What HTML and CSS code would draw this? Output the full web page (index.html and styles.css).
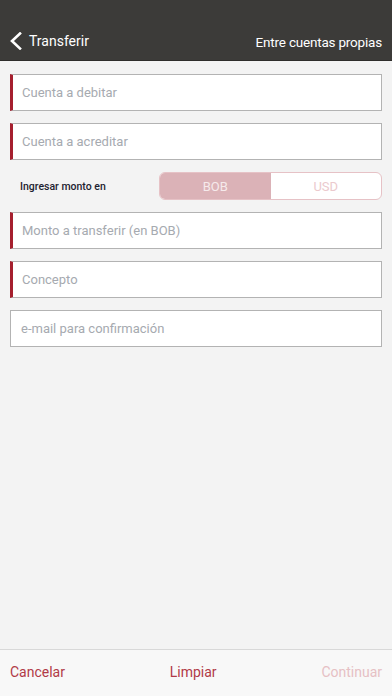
FILE: index.html
```html
<!DOCTYPE html>
<html lang="es">
<head>
<meta charset="utf-8">
<link rel="stylesheet" href="styles.css">
</head>
<body>
<div class="app">
  <header class="topbar">
    <div class="back">
      <svg class="chev" width="14" height="18" viewBox="0 0 14 18"><path d="M11 1.5 L3 9 L11 16.5" fill="none" stroke="#fff" stroke-width="2.6" stroke-linecap="square"/></svg>
      <span>Transferir</span>
    </div>
    <div class="title">Entre cuentas propias</div>
  </header>
  <main class="form">
    <div class="field req">Cuenta a debitar</div>
    <div class="field req">Cuenta a acreditar</div>
    <div class="currency">
      <span class="label">Ingresar monto en</span>
      <div class="toggle">
        <span class="opt on">BOB</span>
        <span class="opt">USD</span>
      </div>
    </div>
    <div class="field req">Monto a transferir (en BOB)</div>
    <div class="field req">Concepto</div>
    <div class="field">e-mail para confirmación</div>
  </main>
  <footer class="actions">
    <span class="act">Cancelar</span>
    <span class="act">Limpiar</span>
    <span class="act off">Continuar</span>
  </footer>
</div>
</body>
</html>
```
FILE: styles.css
```css
* { box-sizing: border-box; }
html, body { margin: 0; padding: 0; }
body { font-family: Roboto, "Liberation Sans", sans-serif; background: #f3f3f3; }
.app { width: 392px; height: 696px; display: flex; flex-direction: column; }
.topbar { height: 61px; background: #3c3b39; border-bottom: 1px solid #2e2d2b; display: flex; align-items: flex-end; justify-content: space-between; padding: 0 10px 10px 9px; color: #fff; font-size: 14px; }
.back { display: flex; align-items: center; gap: 6px; }
.chev { display: block; }
.title { font-size: 13.5px; letter-spacing: -0.2px; }
.form { flex: 1; padding: 13px 10px 0; display: flex; flex-direction: column; gap: 12px; }
.field { height: 37px; flex: none; background: #fff; border: 1px solid #b3b3b3; padding-left: 10px; display: flex; align-items: center; font-size: 13px; color: #a6aab0; }
.field.req { border-left: 3px solid #a51f2e; padding-left: 9px; }
.currency { height: 28px; flex: none; display: flex; align-items: center; justify-content: space-between; padding-left: 10px; }
.label { font-size: 10.5px; font-weight: 500; color: #1d2230; }
.toggle { width: 223px; height: 28px; display: flex; border: 1px solid #e6c2c6; border-radius: 6px; overflow: hidden; background: #fff; }
.opt { flex: 1; display: flex; align-items: center; justify-content: center; font-size: 13px; color: #ebc9cd; }
.opt.on { background: #dbb2b7; color: #f6eaeb; }
.actions { height: 47px; background: #f8f8f8; border-top: 1px solid #d8d8d8; display: flex; align-items: center; justify-content: space-between; padding: 0 10px 2px; font-size: 14px; }
.act { color: #b13a47; }
.act.off { color: #e6c0c4; }
```
